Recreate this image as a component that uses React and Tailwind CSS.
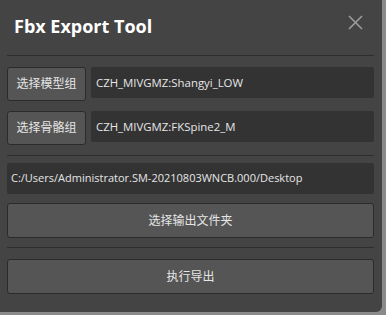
const font = { fontFamily: '"Open Sans", "Noto Sans CJK SC", sans-serif' };

const PickRow = ({ label, value, className = "" }) => (
  <div className={`flex items-start gap-[5px] ${className}`}>
    <button className="h-[34px] w-[79px] shrink-0 rounded-[3px] border border-[#2b2b2b] bg-[#555555] text-[12px] text-[#e6e6e6]">
      {label}
    </button>
    <div className="flex h-[31px] flex-1 items-center rounded-[2px] bg-[#333333] px-[5px] text-[11.4px] text-[#e6e6e6]">
      {value}
    </div>
  </div>
);

export default function App() {
  return (
    <div className="h-[315px] w-[386px] bg-[#8a8a8a]" style={font}>
      <div className="flex h-[312px] w-[382px] flex-col rounded-br-[6px] bg-[#444444] pl-[7px] pr-[8px]">
        <div className="flex h-[56px] shrink-0 items-center justify-between border-b border-[#2e2e2e] pl-[7px] pr-[11px]">
          <h1 className="-mt-[2px] text-[18px] font-bold text-white">Fbx Export Tool</h1>
          <svg className="-mt-[10px] h-[15px] w-[15px]" viewBox="0 0 15 15" fill="none">
            <path d="M1 1L14 14M14 1L1 14" stroke="#9c9c9c" strokeWidth="1.6" />
          </svg>
        </div>

        <PickRow className="mt-[11px]" label="选择模型组" value="CZH_MIVGMZ:Shangyi_LOW" />
        <PickRow className="mt-[10px]" label="选择骨骼组" value="CZH_MIVGMZ:FKSpine2_M" />

        <div className="mt-[10px] border-t border-[#2e2e2e]" />

        <div className="mt-[7px] flex h-[31px] items-center rounded-[2px] bg-[#333333] px-[4px] text-[11px] text-[#e6e6e6]">
          C:/Users/Administrator.SM-20210803WNCB.000/Desktop
        </div>

        <button className="mt-[9px] h-[35px] rounded-[3px] border border-[#2b2b2b] bg-[#555555] text-[12px] text-[#e6e6e6]">
          选择输出文件夹
        </button>

        <div className="mt-[9px] border-t border-[#2e2e2e]" />

        <button className="mt-[11px] h-[35px] rounded-[3px] border border-[#2b2b2b] bg-[#555555] text-[12px] text-[#e6e6e6]">
          执行导出
        </button>
      </div>
    </div>
  );
}
